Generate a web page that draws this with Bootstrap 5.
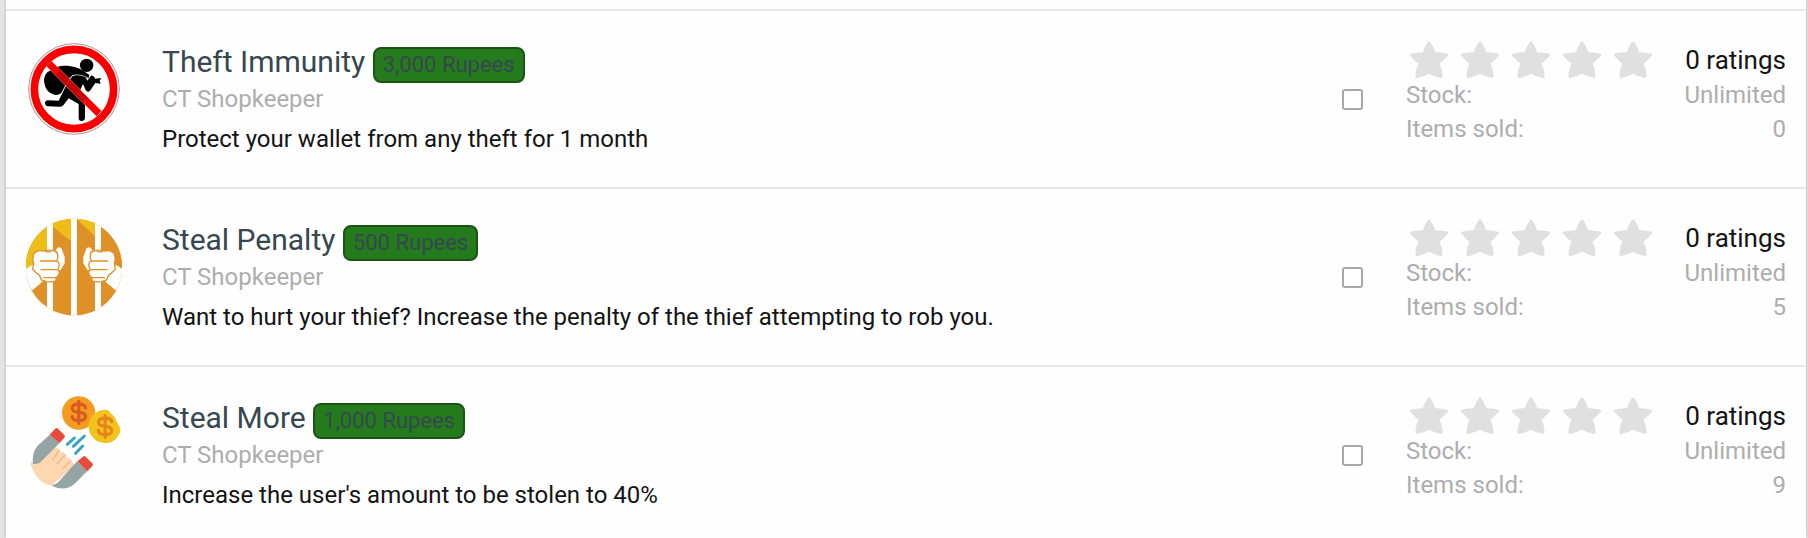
<!DOCTYPE html>
<html lang="en">
<head>
<meta charset="utf-8">
<meta name="viewport" content="width=device-width, initial-scale=1">
<title>Shop items</title>
<link href="https://cdn.jsdelivr.net/npm/bootstrap@5.3.0/dist/css/bootstrap.min.css" rel="stylesheet">
<style>
  body { background: #e4e4e4; font-family: Roboto, "Liberation Sans", sans-serif; font-size: 24px; line-height: 32px; color: #141414; }
  .shop-panel { background: #fefefe; margin: 0 2px 0 6px; padding-top: 9px; min-height: 100vh; box-shadow: 0 0 3px #aaa; }
  .shop-item { border-top: 2px solid #e6e6e6; padding: 30px 20px 32px; }
  .shop-item:last-child { padding-bottom: 24px; }
  .item-pic { width: 96px; height: 96px; overflow: visible; margin-right: 40px; }
  .item-title { font-size: 30px; line-height: 42px; font-weight: 400; }
  .item-title a { color: #37474f; }
  .price-tag { font-size: 22px; line-height: 32px; padding: 0 8px; border: 2px solid #1b5314; border-radius: 8px; background: #237b1c; color: #37474f; }
  .soft-text { color: #adadad; }
  .item-check { appearance: none; width: 21px; height: 21px; border: 2px solid #a8a8a8; border-radius: 3px; background: #fff; margin: 48px 43px 0; }
  .item-check:checked { background: #a8a8a8; }
  .item-stats { width: 380px; }
  .rating-count { font-size: 26px; }
  .stat-line { line-height: 34px; }
  .star-row { gap: 13px; padding-left: 4px; }
  .star-row svg { width: 38px; height: 37px; fill: #e0e0e0; stroke: #e0e0e0; }
</style>
</head>
<body>
<svg class="d-none">
  <symbol id="star" viewBox="0 0 38 37"><path stroke-width="3" stroke-linejoin="round" d="M19 2 Q22 6 24 12.500Q29 12.500 36.500 14Q32 19 27.500 22.500Q31 28 31 35.500Q25 34.500 19 31Q13 34.500 7 35.500Q7 28 10.500 22.500Q6 19 1.500 14Q9 12.500 14 12.500Q16 6 19 2Z"/></symbol>
  <symbol id="dollar" viewBox="0 0 60 80"><g fill="none" stroke="currentColor" stroke-width="10" stroke-linecap="round" stroke-linejoin="round"><path d="M30 5V75M51 26C50 17 42 14 30 14C16 14 9 19 9 27C9 36 18 39 30 40C43 41 51 45 51 53C51 62 42 66 30 66C17 66 9 62 9 53"/></g></symbol>
  <symbol id="fist" viewBox="0 0 100 120" overflow="visible">
    <path fill="#fefefe" d="M70 12 76 4Q84-2 89 6L98 30V50L86 70 68 72Z"/>
    <path fill="#fefefe" stroke="#df9128" stroke-width="4" stroke-linejoin="round" d="M12 16Q20 10 35 13Q48 8 68 13Q78 16 77 26Q78 37 74 42Q84 48 81 58Q81 65 77 69Q85 75 80 84Q78 91 72 92Q74 105 64 104Q48 108 39 103Q27 103 25 92Q24 84 14 80L2 68 5 48Q0 38 4 28Q4 18 12 16Z"/>
    <path fill="none" stroke="#df9128" stroke-width="4" stroke-linecap="round" d="M25 43H73M27 69H76M35 93H71M40 14Q48 17 56 15"/>
  </symbol>
</svg>

<main class="shop-panel">
  <article class="shop-item d-flex">
    <svg class="item-pic flex-shrink-0" viewBox="78 123 288 288" role="img" aria-label="No thieves sign">
      <circle cx="222" cy="267" r="136" fill="#fff" stroke="#955" stroke-width="2"/>
      <circle cx="222" cy="267" r="119" fill="#fff" stroke="#fa0000" stroke-width="23"/>
      <path d="M150 212C162 200 185 196 208 198Q240 201 268 225L266 236Q240 222 219 226L207 237 185 278Q176 286 165 285C142 280 132 260 132 238Q134 218 150 212Z"/>
      <circle cx="260" cy="196" r="20"/>
      <path d="M218 228Q236 220 256 229L262 242 274 226 283 230 285 236 304 234 299 242 302 251 286 249 270 272Q263 279 257 270L249 252 236 280 252 296Q255 299 255 306V354Q254 363 245 363Q236 363 236 354V312L206 295 190 316Q186 321 178 320L144 319Q135 318 135 309Q136 300 145 301L176 302 187 279 205 244Z"/>
      <path fill="none" stroke="#fff" stroke-width="2" d="M268 236Q238 219 216 227L204 243 185 279"/>
      <path d="M147 191 297 341" stroke="#fa0000" stroke-width="22"/>
      <path d="M173 217 256 300" stroke="#c50000" stroke-width="20"/>
      <path d="M139 199 289 349M155 183 305 333" stroke="#fff" stroke-width="1"/>
      <path d="M188 272 212 231M231 280 255 299V315" fill="none" stroke="#e36c6c" stroke-width="1"/>
    </svg>
    <div class="flex-grow-1">
      <h2 class="item-title mb-0"><a href="#theft-immunity" class="text-decoration-none">Theft Immunity</a> <span class="price-tag d-inline-block">3,000 Rupees</span></h2>
      <div class="soft-text">CT Shopkeeper</div>
      <p class="mt-2 mb-0">Protect your wallet from any theft for 1 month</p>
    </div>
    <input class="item-check flex-shrink-0" type="checkbox" aria-label="Select Theft Immunity">
    <div class="item-stats flex-shrink-0">
      <div class="d-flex justify-content-between align-items-center">
        <div class="star-row d-flex" role="img" aria-label="No stars"><svg><use href="#star"/></svg><svg><use href="#star"/></svg><svg><use href="#star"/></svg><svg><use href="#star"/></svg><svg><use href="#star"/></svg></div>
        <span class="rating-count">0 ratings</span>
      </div>
      <div class="stat-line soft-text d-flex justify-content-between"><span>Stock:</span><span>Unlimited</span></div>
      <div class="stat-line soft-text d-flex justify-content-between"><span>Items sold:</span><span>0</span></div>
    </div>
  </article>

  <article class="shop-item d-flex">
    <svg class="item-pic flex-shrink-0" viewBox="78 114 288 288" role="img" aria-label="Hands on prison bars">
      <clipPath id="disc"><circle cx="222" cy="258" r="145"/></clipPath>
      <g clip-path="url(#disc)">
        <path fill="#df9128" d="M78 110H366V410H78Z"/>
        <path fill="#efbd17" d="M78 110H141V215L97 251 78 263ZM159 110H213V181L159 137ZM231 110H285V166L231 115Z"/>
        <path fill="#fefefe" d="M141 100H159V410H141ZM213 100H231V410H213ZM285 100H303V410H285ZM78 263 97 251 130 300 97 328 78 310ZM366 263 347 251 314 300 347 328 366 310Z"/>
      </g>
      <use href="#fist" x="96" y="197" width="100" height="120"/>
      <g transform="translate(444 0) scale(-1 1)"><use href="#fist" x="96" y="197" width="100" height="120"/></g>
    </svg>
    <div class="flex-grow-1">
      <h2 class="item-title mb-0"><a href="#steal-penalty" class="text-decoration-none">Steal Penalty</a> <span class="price-tag d-inline-block">500 Rupees</span></h2>
      <div class="soft-text">CT Shopkeeper</div>
      <p class="mt-2 mb-0">Want to hurt your thief? Increase the penalty of the thief attempting to rob you.</p>
    </div>
    <input class="item-check flex-shrink-0" type="checkbox" aria-label="Select Steal Penalty">
    <div class="item-stats flex-shrink-0">
      <div class="d-flex justify-content-between align-items-center">
        <div class="star-row d-flex" role="img" aria-label="No stars"><svg><use href="#star"/></svg><svg><use href="#star"/></svg><svg><use href="#star"/></svg><svg><use href="#star"/></svg><svg><use href="#star"/></svg></div>
        <span class="rating-count">0 ratings</span>
      </div>
      <div class="stat-line soft-text d-flex justify-content-between"><span>Stock:</span><span>Unlimited</span></div>
      <div class="stat-line soft-text d-flex justify-content-between"><span>Items sold:</span><span>5</span></div>
    </div>
  </article>

  <article class="shop-item d-flex">
    <svg class="item-pic flex-shrink-0" viewBox="78 109 288 288" role="img" aria-label="Magnet pulling coins">
      <circle cx="236" cy="157" r="50" fill="#f49b20"/>
      <path fill="#f2c41b" d="M314 147Q326 146 332 158Q346 168 349 182Q362 201 361 213Q355 224 352 229C341 244 329 247 315 247C286 247 266 225 266 197C266 170 286 149 314 147Z"/>
      <use href="#dollar" x="208" y="117" width="57" height="76" color="#d95b22"/>
      <use href="#dollar" x="287" y="159" width="57" height="76" color="#e6841f"/>
      <path stroke="#3aa2c3" stroke-width="9" stroke-linecap="round" d="M202 251 223 232M220 257 253 226M227 278 248 256"/>
      <path fill="#fdd7b0" d="M90 308Q92 302 100 304L154 262Q168 257 176 265L181 276Q192 270 196 281L199 292Q208 288 213 300L222 309 215 322 156 374H146C126 368 113 352 107 344Z"/>
      <path fill="none" stroke="#f0bd94" stroke-width="5" stroke-linecap="round" d="M177 270 158 297M195 284 171 309M212 301 187 325"/>
      <path fill="#95a5a5" d="M149 222 178 248 122 304Q112 313 99 309C97 286 101 268 115 254ZM220 314 232 302 262 331 224 369C202 387 178 388 155 374Q166 373 176 363Z"/>
      <path fill="#e64b3c" d="M149 222 167 203Q170 200 174 204L193 223Q197 227 193 231L178 248ZM232 302 249 288Q253 284 257 288L277 308Q281 312 277 316L262 332Z"/>
    </svg>
    <div class="flex-grow-1">
      <h2 class="item-title mb-0"><a href="#steal-more" class="text-decoration-none">Steal More</a> <span class="price-tag d-inline-block">1,000 Rupees</span></h2>
      <div class="soft-text">CT Shopkeeper</div>
      <p class="mt-2 mb-0">Increase the user's amount to be stolen to 40%</p>
    </div>
    <input class="item-check flex-shrink-0" type="checkbox" aria-label="Select Steal More">
    <div class="item-stats flex-shrink-0">
      <div class="d-flex justify-content-between align-items-center">
        <div class="star-row d-flex" role="img" aria-label="No stars"><svg><use href="#star"/></svg><svg><use href="#star"/></svg><svg><use href="#star"/></svg><svg><use href="#star"/></svg><svg><use href="#star"/></svg></div>
        <span class="rating-count">0 ratings</span>
      </div>
      <div class="stat-line soft-text d-flex justify-content-between"><span>Stock:</span><span>Unlimited</span></div>
      <div class="stat-line soft-text d-flex justify-content-between"><span>Items sold:</span><span>9</span></div>
    </div>
  </article>
</main>
<script src="https://cdn.jsdelivr.net/npm/bootstrap@5.3.0/dist/js/bootstrap.bundle.min.js"></script>
</body>
</html>
